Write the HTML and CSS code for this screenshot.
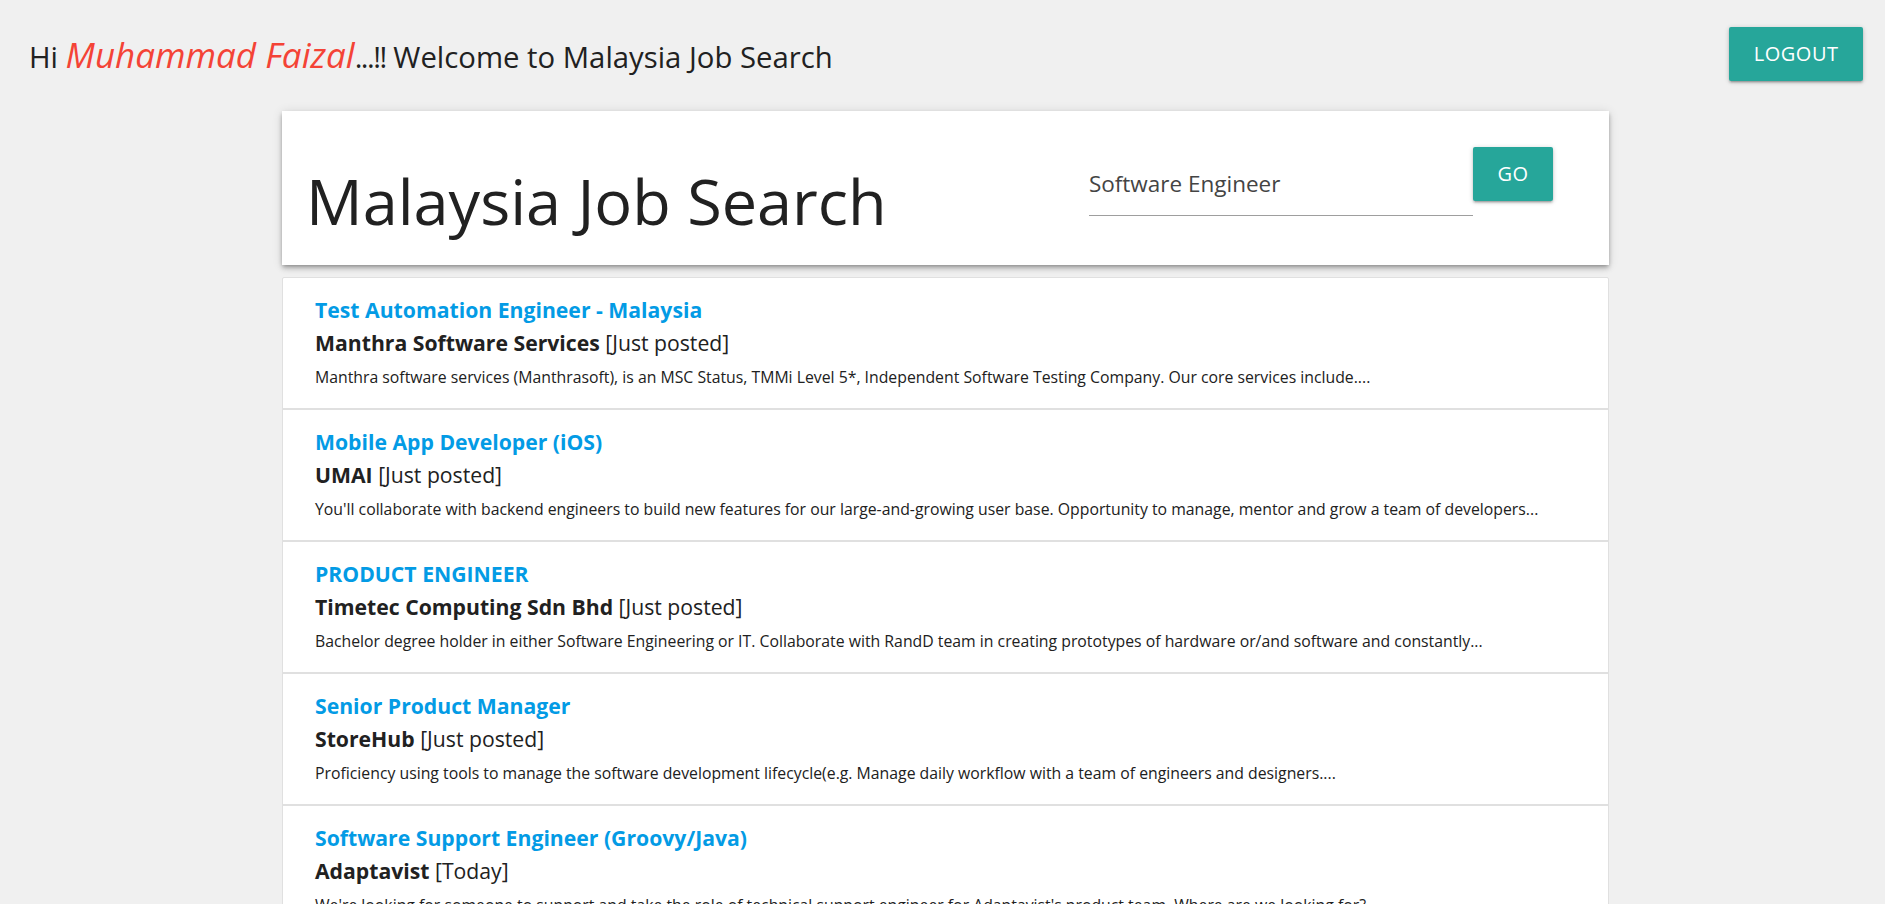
FILE: index.html
```html
<!DOCTYPE html>
<html lang="en">
<head>
<meta charset="utf-8">
<title>Malaysia Job Search</title>
<link rel="stylesheet" href="styles.css">
</head>
<body>
<div class="topbar">
  <h4 class="greeting">Hi <span class="name">Muhammad Faizal</span><span class="exclaim">...!!</span> Welcome to Malaysia Job Search</h4>
  <button class="btn" type="button">Logout</button>
</div>
<main class="container">
  <header class="search-card">
    <h1 class="page-title">Malaysia Job Search</h1>
    <form class="search-form">
      <input class="search-input" type="text" value="Software Engineer">
      <button class="btn" type="button">Go</button>
    </form>
  </header>
  <ul class="job-list">
    <li class="job-item">
      <a class="job-title" href="#">Test Automation Engineer - Malaysia</a>
      <div class="job-company"><strong>Manthra Software Services</strong> [Just posted]</div>
      <p class="job-desc">Manthra software services (Manthrasoft), is an MSC Status, TMMi Level 5*, Independent Software Testing Company. Our core services include....</p>
    </li>
    <li class="job-item">
      <a class="job-title" href="#">Mobile App Developer (iOS)</a>
      <div class="job-company"><strong>UMAI</strong> [Just posted]</div>
      <p class="job-desc">You'll collaborate with backend engineers to build new features for our large-and-growing user base. Opportunity to manage, mentor and grow a team of developers...</p>
    </li>
    <li class="job-item">
      <a class="job-title" href="#">PRODUCT ENGINEER</a>
      <div class="job-company"><strong>Timetec Computing Sdn Bhd</strong> [Just posted]</div>
      <p class="job-desc">Bachelor degree holder in either Software Engineering or IT. Collaborate with RandD team in creating prototypes of hardware or/and software and constantly...</p>
    </li>
    <li class="job-item">
      <a class="job-title" href="#">Senior Product Manager</a>
      <div class="job-company"><strong>StoreHub</strong> [Just posted]</div>
      <p class="job-desc">Proficiency using tools to manage the software development lifecycle(e.g. Manage daily workflow with a team of engineers and designers....</p>
    </li>
    <li class="job-item">
      <a class="job-title" href="#">Software Support Engineer (Groovy/Java)</a>
      <div class="job-company"><strong>Adaptavist</strong> [Today]</div>
      <p class="job-desc">We're looking for someone to support and take the role of technical support engineer for Adaptavist's product team. Where are we looking for?...</p>
    </li>
  </ul>
</main>
</body>
</html>
```
FILE: styles.css
```css
html, body {
  margin: 0;
  padding: 0;
  overflow: hidden;
}

body {
  background: #f0f0f0;
  font-family: "Open Sans", "Noto Sans", "Liberation Sans", sans-serif;
  color: #212121;
}

.topbar {
  display: flex;
  justify-content: space-between;
  align-items: flex-start;
  padding: 27px 22px 0 29px;
}

.greeting {
  margin: 9px 0 0 0;
  font-size: 29.3px;
  line-height: 38px;
  font-weight: 400;
  color: #212121;
}

.name {
  color: #f44336;
  font-style: italic;
  font-size: 35px;
  line-height: 38px;
}

.exclaim {
  letter-spacing: -1.5px;
}

.btn {
  height: 54px;
  padding: 0 24.5px;
  border: none;
  border-radius: 2px;
  background: #26a69a;
  color: #fff;
  font-family: "Open Sans", "Noto Sans", sans-serif;
  font-size: 20px;
  line-height: 54px;
  letter-spacing: 0.5px;
  text-transform: uppercase;
  box-shadow: 0 2px 2px 0 rgba(0,0,0,.14), 0 3px 1px -2px rgba(0,0,0,.12), 0 1px 5px 0 rgba(0,0,0,.2);
  cursor: pointer;
}

.container {
  width: 1327px;
  margin: 30px auto 0;
  padding-left: 6px;
}

.search-card {
  display: flex;
  justify-content: space-between;
  align-items: flex-start;
  background: #fff;
  box-shadow: 0 4px 5px 0 rgba(0,0,0,.14), 0 1px 10px 0 rgba(0,0,0,.12), 0 2px 4px -1px rgba(0,0,0,.3);
}

.page-title {
  margin: 58px 0 33px 24px;
  font-size: 63px;
  line-height: 63px;
  font-weight: 400;
  color: #212121;
}

.search-form {
  display: flex;
  align-items: flex-start;
  margin: 36px 56px 0 0;
}

.search-input {
  box-sizing: content-box;
  width: 384px;
  height: 30px;
  padding: 21px 0 17px;
  margin: 0;
  border: none;
  border-bottom: 1px solid #9e9e9e;
  background: transparent;
  outline: none;
  font-family: "Open Sans", "Noto Sans", sans-serif;
  font-size: 22.5px;
  color: #444;
}

.job-list {
  list-style: none;
  margin: 12px 0 0;
  padding: 0;
  background: #fff;
  border: 1px solid #e0e0e0;
  border-radius: 2px;
}

.job-item {
  padding: 15px 32px 14px;
  border-bottom: 2px solid #e0e0e0;
}

.job-title {
  display: block;
  font-size: 21.2px;
  line-height: 33px;
  font-weight: 700;
  color: #039be5;
  text-decoration: none;
}

.job-company {
  font-size: 21.2px;
  line-height: 33px;
  color: #212121;
}

.job-company strong {
  font-weight: 700;
}

.job-desc {
  margin: 2px 0 0;
  font-size: 15.8px;
  line-height: 33px;
  color: #212121;
}
```
